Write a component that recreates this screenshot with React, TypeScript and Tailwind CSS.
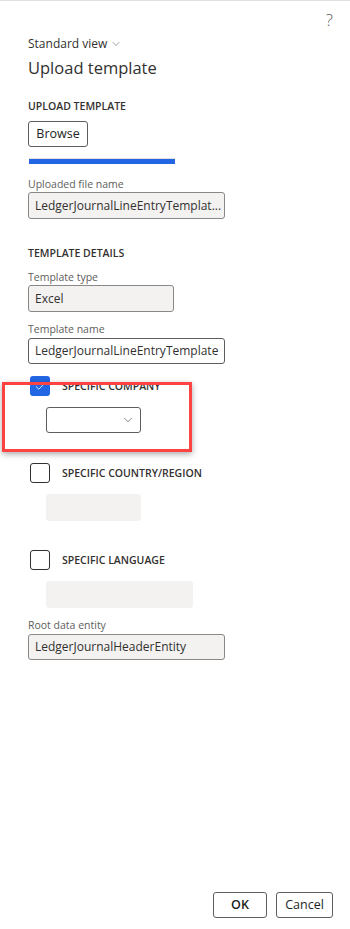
import { Check, ChevronDown } from 'lucide-react';

const font = { fontFamily: '"Segoe UI", "Open Sans", sans-serif' };

function FieldLabel({ children, className = '' }: { children: string; className?: string }) {
  return <div className={`h-[16px] text-[10.5px] leading-[16px] text-[#605e5c] ${className}`}>{children}</div>;
}

function SectionTitle({ children, className = '' }: { children: string; className?: string }) {
  return <div className={`h-[16px] text-[10.5px] leading-[16px] font-semibold text-[#323130] ${className}`}>{children}</div>;
}

function CheckRow({ label, checked }: { label: string; checked?: boolean }) {
  return (
    <div className="flex items-center h-[20px] pl-[2px]">
      {checked ? (
        <div className="w-[20px] h-[20px] rounded-[3px] bg-[#2266e3] flex items-center justify-center">
          <Check className="w-[13px] h-[13px] text-white" strokeWidth={1.5} />
        </div>
      ) : (
        <div className="w-[20px] h-[20px] rounded-[3px] border border-[#323130] bg-white" />
      )}
      <span className="ml-[12px] text-[10.5px] font-semibold text-[#323130] leading-[16px]">{label}</span>
    </div>
  );
}

export default function App() {
  return (
    <div style={font} className="w-[350px] h-[929px] bg-white border-t border-[#e1e1e1] flex flex-col text-[#323130]">
      <div className="flex justify-end pr-[17px] pt-[7px] h-[31px]">
        <span className="text-[17px] leading-[24px] font-light text-[#605e5c]">?</span>
      </div>

      <div className="px-[28px] flex flex-col">
        <div className="mt-[2px] h-[20px] flex items-center text-[12px] leading-[20px] text-[#323130]">
          Standard view
          <ChevronDown className="ml-[3px] w-[12px] h-[12px] text-[#605e5c]" strokeWidth={1.25} />
        </div>
        <div className="mt-[2px] h-[24px] text-[16.5px] leading-[24px] text-[#323130]">Upload template</div>

        <SectionTitle className="mt-[18px]">UPLOAD TEMPLATE</SectionTitle>
        <button className="mt-[7px] w-[60px] h-[26px] border border-[#605e5c] rounded-[3px] bg-white text-[12.5px] text-[#201f1e]">
          Browse
        </button>
        <div className="mt-[11px] ml-[1px] w-[146px] h-[6px] bg-[#e1dfdd] pt-[1px]">
          <div className="w-full h-[5px] bg-[#2266e3]" />
        </div>

        <FieldLabel className="mt-[12px]">Uploaded file name</FieldLabel>
        <div className="w-[197px] h-[27px] border border-[#8a8886] rounded-[3px] bg-[#f3f2f1] px-[6px] flex items-center text-[12px] text-[#323130] overflow-hidden whitespace-nowrap">
          LedgerJournalLineEntryTemplat...
        </div>

        <SectionTitle className="mt-[26px]">TEMPLATE DETAILS</SectionTitle>
        <FieldLabel className="mt-[8px]">Template type</FieldLabel>
        <div className="w-[146px] h-[27px] border border-[#8a8886] rounded-[3px] bg-[#f3f2f1] px-[6px] flex items-center text-[12px] text-[#323130]">
          Excel
        </div>

        <FieldLabel className="mt-[9px]">Template name</FieldLabel>
        <div className="mt-[1px] w-[197px] h-[26px] border border-[#605e5c] rounded-[3px] bg-white px-[6px] flex items-center text-[12px] text-[#323130] whitespace-nowrap overflow-hidden">
          LedgerJournalLineEntryTemplate
        </div>

        <div className="relative mt-[12px]">
          <CheckRow label="SPECIFIC COMPANY" checked />
          <div className="mt-[11px] ml-[18px] w-[95px] h-[26px] border border-[#605e5c] rounded-[3px] bg-white flex items-center justify-end pr-[5px]">
            <ChevronDown className="w-[14px] h-[14px] text-[#605e5c]" strokeWidth={1.25} />
          </div>
          <div className="absolute left-[-26px] top-[6px] w-[190px] h-[70px] border-[3px] border-[#ff4343] shadow-[0_2px_6px_rgba(0,0,0,0.35)]" />
        </div>

        <div className="mt-[30px]">
          <CheckRow label="SPECIFIC COUNTRY/REGION" />
        </div>
        <div className="mt-[11px] ml-[18px] w-[95px] h-[27px] rounded-[3px] bg-[#f3f2f1]" />

        <div className="mt-[29px]">
          <CheckRow label="SPECIFIC LANGUAGE" />
        </div>
        <div className="mt-[11px] ml-[18px] w-[147px] h-[27px] rounded-[3px] bg-[#f3f2f1]" />

        <FieldLabel className="mt-[9px]">Root data entity</FieldLabel>
        <div className="mt-[1px] w-[197px] h-[26px] border border-[#8a8886] rounded-[3px] bg-[#f3f2f1] px-[6px] flex items-center text-[12px] text-[#323130] whitespace-nowrap">
          LedgerJournalHeaderEntity
        </div>
      </div>

      <div className="flex-1" />
      <div className="flex justify-end gap-[9px] pr-[17px] pb-[11px]">
        <button className="w-[54px] h-[26px] border border-[#605e5c] rounded-[3px] bg-white text-[12.5px] font-semibold text-[#201f1e]">OK</button>
        <button className="w-[57px] h-[26px] border border-[#605e5c] rounded-[3px] bg-white text-[12.5px] text-[#201f1e]">Cancel</button>
      </div>
    </div>
  );
}
